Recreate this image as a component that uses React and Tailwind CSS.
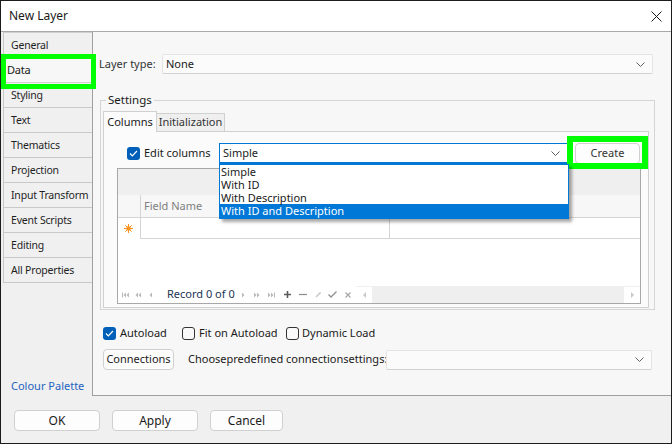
import React from 'react';

const font = { fontFamily: '"Noto Sans", "Open Sans", sans-serif' };

function Chevron() {
  return (
    <svg width="9" height="5" viewBox="0 0 9 5" className="shrink-0">
      <polyline points="0.5,0.5 4.5,4.5 8.5,0.5" fill="none" stroke="#5f5f5f" strokeWidth="1" />
    </svg>
  );
}

function Check({ checked }) {
  if (checked) {
    return (
      <span className="w-[13px] h-[13px] rounded-[3px] bg-[#005fb8] flex items-center justify-center shrink-0">
        <svg width="9" height="7" viewBox="0 0 9 7">
          <polyline points="1,3.5 3.3,5.8 8,1" fill="none" stroke="#fff" strokeWidth="1.2" />
        </svg>
      </span>
    );
  }
  return <span className="w-[13px] h-[13px] rounded-[3px] border border-[#333] bg-[#f9f9f9] shrink-0" />;
}

function Btn({ children, className = '' }) {
  return (
    <div className={`h-[21px] flex items-center justify-center rounded-[4px] border border-[#d0d0d0] bg-[#fdfdfd] text-[#1a1a1a] ${className}`}>
      {children}
    </div>
  );
}

// navigator glyphs
const light = '#b9b9b9';
function NavFirst() {
  return (
    <svg width="7" height="6" viewBox="0 0 7 6" className="shrink-0">
      <rect x="0" y="0.5" width="1" height="5" fill={light} />
      <path d="M4 0.5 L1.5 3 L4 5.5Z M7 0.5 L4.5 3 L7 5.5Z" fill={light} />
    </svg>
  );
}
function NavPrevPage() {
  return (
    <svg width="6" height="6" viewBox="0 0 6 6" className="shrink-0">
      <path d="M3 0.5 L0.5 3 L3 5.5Z M6 0.5 L3.5 3 L6 5.5Z" fill={light} />
    </svg>
  );
}
function NavPrev() {
  return (
    <svg width="3" height="6" viewBox="0 0 3 6" className="shrink-0">
      <path d="M3 0.5 L0.5 3 L3 5.5Z" fill={light} />
    </svg>
  );
}
function NavNext() {
  return (
    <svg width="3" height="6" viewBox="0 0 3 6" className="shrink-0">
      <path d="M0 0.5 L2.5 3 L0 5.5Z" fill={light} />
    </svg>
  );
}
function NavNextPage() {
  return (
    <svg width="6" height="6" viewBox="0 0 6 6" className="shrink-0">
      <path d="M0 0.5 L2.5 3 L0 5.5Z M3 0.5 L5.5 3 L3 5.5Z" fill={light} />
    </svg>
  );
}
function NavLast() {
  return (
    <svg width="7" height="6" viewBox="0 0 7 6" className="shrink-0">
      <path d="M0 0.5 L2.5 3 L0 5.5Z M3 0.5 L5.5 3 L3 5.5Z" fill={light} />
      <rect x="6" y="0.5" width="1" height="5" fill={light} />
    </svg>
  );
}

function Asterisk() {
  return (
    <svg width="9" height="9" viewBox="0 0 9 9">
      <g stroke="#f7931e" strokeWidth="1">
        <line x1="4.5" y1="0" x2="4.5" y2="9" />
        <line x1="0" y1="4.5" x2="9" y2="4.5" />
        <line x1="1.3" y1="1.3" x2="7.7" y2="7.7" />
        <line x1="7.7" y1="1.3" x2="1.3" y2="7.7" />
      </g>
      <circle cx="4.5" cy="4.5" r="2.3" fill="#f7931e" />
    </svg>
  );
}

const tabs = ['General', 'Data', 'Styling', 'Text', 'Thematics', 'Projection', 'Input Transform', 'Event Scripts', 'Editing', 'All Properties'];

export default function App() {
  return (
    <div style={font} className="relative w-[672px] h-[444px] border border-[#1c1c1c] bg-[#f0f0f0] flex flex-col text-[11px] text-[#1a1a1a] overflow-hidden">
      {/* title bar */}
      <div className="h-[31px] shrink-0 bg-white border-b border-[#a9a9a9] flex items-center justify-between pl-[8px] pr-[9px]">
        <span className="text-[12px]">New Layer</span>
        <svg width="11" height="11" viewBox="0 0 11 11">
          <path d="M0.5 0.5 L10.5 10.5 M10.5 0.5 L0.5 10.5" stroke="#1a1a1a" strokeWidth="1" />
        </svg>
      </div>

      <div className="h-[364px] shrink-0 flex">
        {/* sidebar */}
        <div className="w-[91px] shrink-0 flex flex-col pl-[2px]">
          <div className="border-t border-[#d0d0d0] text-[10.5px] tracking-[-0.2px]">
            {tabs.map((t) => (
              <div
                key={t}
                className={
                  t === 'Data'
                    ? 'h-[25px] flex items-center pl-[4px] pt-[1px] bg-[#f7f7f7] border-b border-[#d0d0d0] text-[11px]'
                    : 'h-[25px] flex items-center pl-[7px] pt-[1px] border-l border-b border-[#c8c8c8] text-[#1f1f1f] whitespace-nowrap'
                }
              >
                {t}
              </div>
            ))}
          </div>
          <div className="flex-1" />
          <div className="pl-[8px] pb-[1px] h-[18px] text-[#1f63c0] whitespace-nowrap">Colour Palette</div>
        </div>

        {/* main panel */}
        <div className="flex-1 bg-[#f7f7f7] border-l border-b border-[#a0a0a0] flex flex-col">
          <div className="mt-[22px] pl-[6px] flex items-center">
            <span className="w-[63px] text-[#333]">Layer type:</span>
            <div className="w-[491px] h-[20px] bg-[#fbfbfb] border border-[#e4e4e4] border-b-[#d2d2d2] rounded-[2px] flex items-center justify-between pl-[3px] pr-[7px]">
              <span>None</span>
              <Chevron />
            </div>
          </div>

          <fieldset className="mt-[18px] ml-[7px] w-[555px] h-[218px] border border-[#d5d5d5] p-0 m-0 min-w-0">
            <legend className="ml-[5px] px-[2px] leading-[16px] text-[11.5px]">Settings</legend>
            <div className="mt-[3px] ml-[2px] w-[546px]">
              {/* tab strip */}
              <div className="flex items-end h-[21px]">
                <div className="w-[54px] h-[21px] border border-b-0 border-[#d0d0d0] bg-[#fbfbfb] flex items-center justify-center">Columns</div>
                <div className="w-[68px] h-[19px] border-t border-r border-b border-[#d0d0d0] bg-[#efefef] flex items-center justify-center text-[#333]">Initialization</div>
                <div className="flex-1 border-b border-[#d0d0d0]" />
              </div>
              {/* tab page */}
              <div className="h-[176px] border-x border-b border-[#d0d0d0] bg-[#fbfbfb] pt-[11px]">
                <div className="flex items-center h-[21px] pl-[23px]">
                  <Check checked />
                  <span className="ml-[4px] w-[75px]">Edit columns</span>
                  <div className="relative w-[350px] h-[21px] bg-white border border-[#0078d4] border-b-2 flex items-center justify-between pl-[3px] pr-[8px]">
                    <span>Simple</span>
                    <Chevron />
                    <div className="absolute left-[-1px] top-[20px] w-[350px] bg-white border border-[#0078d4] shadow-[3px_3px_3px_rgba(0,0,0,0.35)] z-10">
                      <div className="h-[13px] leading-[13px] pl-[1px]">Simple</div>
                      <div className="h-[13px] leading-[13px] pl-[1px]">With ID</div>
                      <div className="h-[13px] leading-[13px] pl-[1px]">With Description</div>
                      <div className="h-[14px] leading-[13px] pl-[1px] bg-[#0078d7] text-white">With ID and Description</div>
                    </div>
                  </div>
                  <Btn className="ml-[6px] w-[65px] text-[#333]">Create</Btn>
                </div>

                {/* grid */}
                <div className="mt-[4px] ml-[13px] w-[524px] h-[136px] border border-[#a8a8a8] bg-white flex flex-col">
                  <div className="h-[26px] bg-[#efefef] shrink-0" />
                  <div className="h-[23px] shrink-0 flex bg-[#f7f7f7] border-b border-[#d5d5d5]">
                    <div className="w-[23px] border-r border-[#d5d5d5]" />
                    <div className="w-[249px] border-r border-[#d5d5d5] flex items-center pl-[3px] text-[#7f7f7f]">Field Name</div>
                    <div className="flex-1" />
                  </div>
                  <div className="h-[21px] shrink-0 flex">
                    <div className="w-[23px] border-r border-[#d5d5d5] flex items-center justify-center pr-[2px]">
                      <Asterisk />
                    </div>
                    <div className="w-[249px] border-r border-b border-[#d5d5d5]" />
                    <div className="flex-1 border-b border-[#d5d5d5]" />
                  </div>
                  <div className="flex-1" />
                  <div className="h-[17px] shrink-0 flex items-center">
                    <span className="ml-[4px] flex"><NavFirst /></span>
                    <span className="ml-[6px] flex"><NavPrevPage /></span>
                    <span className="ml-[8px] flex"><NavPrev /></span>
                    <span className="ml-[15px] w-[67px] whitespace-nowrap text-[#233454]">Record 0 of 0</span>
                    <span className="ml-[8px] flex"><NavNext /></span>
                    <span className="ml-[9px] flex"><NavNextPage /></span>
                    <span className="ml-[8px] flex"><NavLast /></span>
                    <svg width="7" height="7" viewBox="0 0 7 7" className="ml-[9px] shrink-0">
                      <path d="M3.5 0 V7 M0 3.5 H7" stroke="#5a5a5a" strokeWidth="1.6" />
                    </svg>
                    <svg width="8" height="7" viewBox="0 0 8 7" className="ml-[8px] shrink-0">
                      <path d="M0 3.5 H8" stroke="#8a8a8a" strokeWidth="1.2" />
                    </svg>
                    <svg width="7" height="7" viewBox="0 0 7 7" className="ml-[8px] shrink-0">
                      <path d="M0.5 6.5 L1 4.8 L5 0.8 L6.2 2 L2.2 6 Z" fill="#cdcdcd" />
                    </svg>
                    <svg width="9" height="7" viewBox="0 0 9 7" className="ml-[6px] shrink-0">
                      <polyline points="0.5,3.5 3,6 8.5,0.5" fill="none" stroke="#8f8f8f" strokeWidth="1.3" />
                    </svg>
                    <svg width="6" height="6" viewBox="0 0 6 6" className="ml-[8px] shrink-0">
                      <path d="M0.5 0.5 L5.5 5.5 M5.5 0.5 L0.5 5.5" stroke="#a8a8a8" strokeWidth="1.2" />
                    </svg>
                    <div className="ml-[5px] flex-1 h-[17px] bg-[#efefef] flex items-center justify-between">
                      <div className="w-[16px] h-[16px] bg-white flex items-center justify-center">
                        <svg width="3" height="6" viewBox="0 0 3 6"><path d="M3 0 L0 3 L3 6Z" fill="#c8c8c8" /></svg>
                      </div>
                      <div className="w-[16px] h-[16px] bg-white flex items-center justify-center">
                        <svg width="3" height="6" viewBox="0 0 3 6"><path d="M0 0 L3 3 L0 6Z" fill="#c8c8c8" /></svg>
                      </div>
                    </div>
                  </div>
                </div>
              </div>
            </div>
          </fieldset>

          <div className="mt-[15px] pl-[10px] h-[16px] flex items-center">
            <div className="w-[79px] flex items-center">
              <Check checked />
              <span className="ml-[4px]">Autoload</span>
            </div>
            <div className="w-[104px] flex items-center">
              <Check />
              <span className="ml-[4px]">Fit on Autoload</span>
            </div>
            <div className="flex items-center">
              <Check />
              <span className="ml-[3px]">Dynamic Load</span>
            </div>
          </div>

          <div className="mt-[8px] pl-[10px] flex items-center">
            <Btn className="w-[71px]">Connections</Btn>
            <span className="ml-[14px] w-[198px] whitespace-nowrap">Choosepredefined connectionsettings:</span>
            <div className="w-[266px] h-[20px] bg-[#fbfbfb] border border-[#e4e4e4] border-b-[#d2d2d2] rounded-[2px] flex items-center justify-end pr-[7px]">
              <Chevron />
            </div>
          </div>
        </div>
      </div>

      {/* footer */}
      <div className="flex-1 flex items-start pt-[14px] pl-[13px] text-[12px]">
        <Btn className="w-[86px] border-[#0067c0]">OK</Btn>
        <Btn className="ml-[12px] w-[86px]">Apply</Btn>
        <Btn className="ml-[12px] w-[73px]">Cancel</Btn>
      </div>

      {/* highlight annotations */}
      <div className="absolute left-0 top-[53px] w-[95px] h-[35px] border-[5px] border-[#00ff00] pointer-events-none" />
      <div className="absolute left-[566px] top-[135px] w-[81px] h-[33px] border-[6px] border-[#00ff00] pointer-events-none" />
    </div>
  );
}
